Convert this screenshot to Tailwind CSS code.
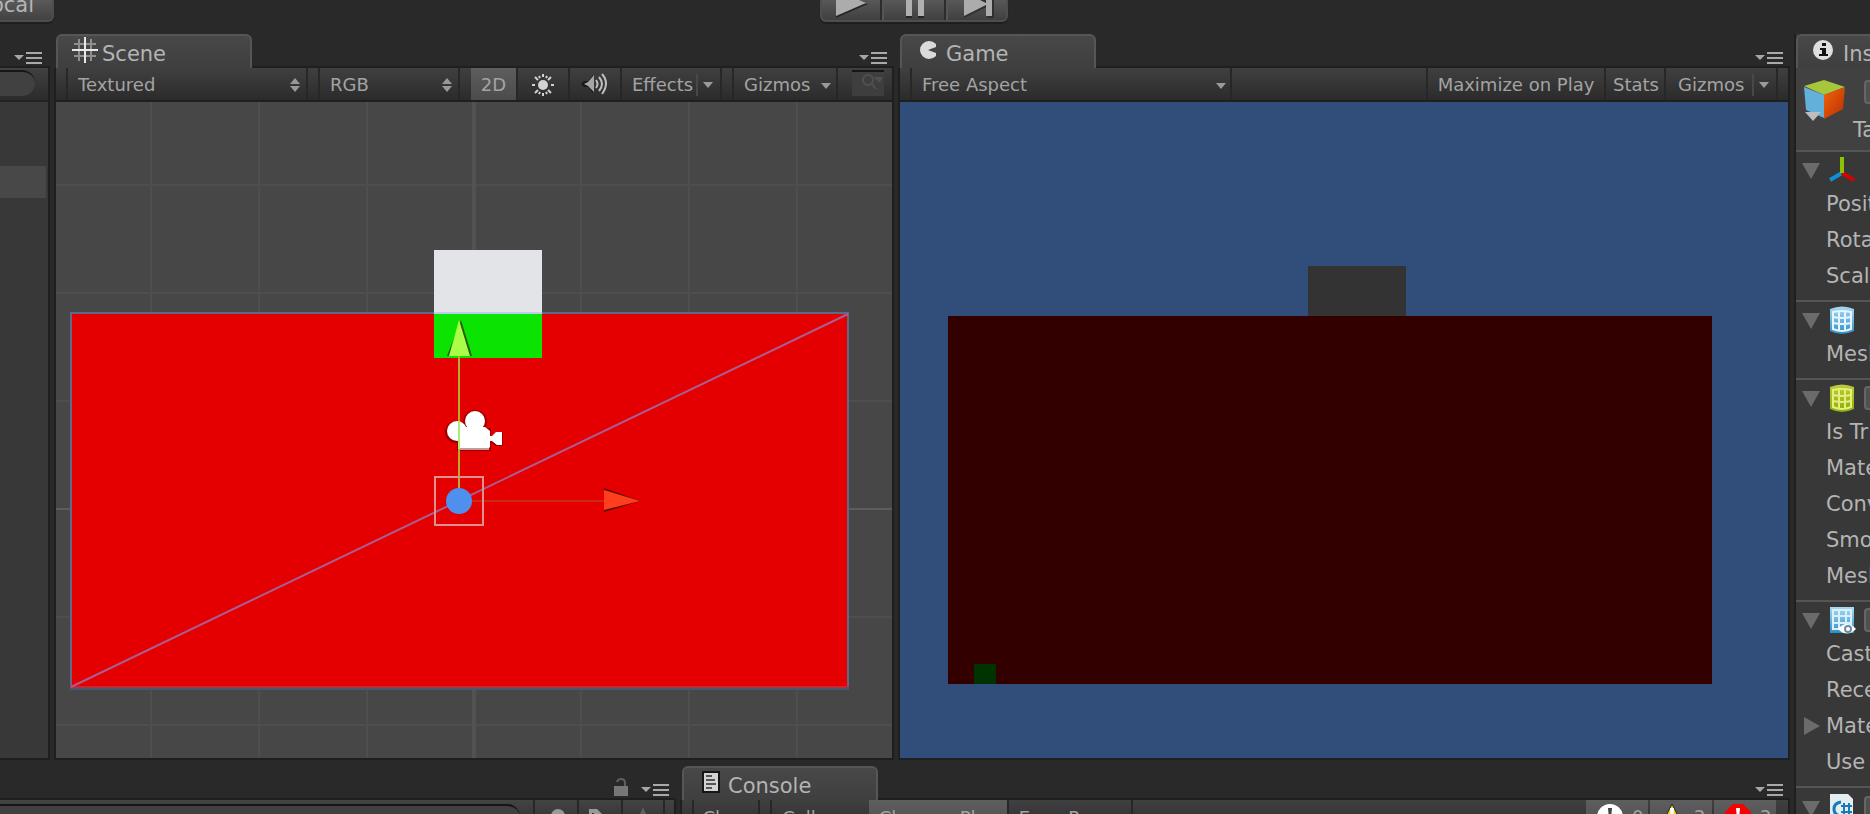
<!DOCTYPE html>
<html lang="en">
<head>
<meta charset="utf-8">
<title>Unity Editor</title>
<script src="https://cdn.jsdelivr.net/npm/@tailwindcss/browser@4"></script>
</head>
<body class="h-screen overflow-hidden bg-[#292929] text-[#a3a3a3] font-['DejaVu_Sans','Liberation_Sans',sans-serif] text-[18px] leading-6">
<svg class="absolute h-0 w-0">
  <!-- shared glyphs -->
  <symbol id="menu" viewBox="0 0 30 12"><path d="M1 3h10L6 8z" fill="#a6a6a6"/><path d="M13 1h16M13 6h16M13 11h16" stroke="#a9a9a9" stroke-width="2"/></symbol>
  <symbol id="down" viewBox="0 0 10 6"><path d="M0 0h10L5 6z" fill="#9a9a9a"/></symbol>
  <symbol id="updown" viewBox="0 0 10 14"><path d="M0 6L5 0l5 6zM0 8h10l-5 6z" fill="#999"/></symbol>
  <symbol id="foldout" viewBox="0 0 18 16"><path d="M0 0h18L9 16z" fill="#6b6b6b"/></symbol>
  <symbol id="bang" viewBox="0 0 28 28"><path d="M12 5h4l-1 11h-2zM12 18h4v4h-4z"/></symbol>
  <linearGradient id="blue" x1="0" y1="0" x2="0" y2="1"><stop offset="0" stop-color="#a9daf4"/><stop offset="1" stop-color="#2e8fc9"/></linearGradient>
  <linearGradient id="lime" x1="0" y1="0" x2="0" y2="1"><stop offset="0" stop-color="#bccb3c"/><stop offset="1" stop-color="#88ae10"/></linearGradient>
  <linearGradient id="orange" x1="0" y1="0" x2="1" y2="1"><stop offset="0" stop-color="#f2660c"/><stop offset="1" stop-color="#b82c04"/></linearGradient>
</svg>
<div class="flex h-full flex-col">
  <header class="relative flex h-[34px] shrink-0 items-start justify-center overflow-hidden">
    <button class="absolute left-0 top-0 flex h-[22px] w-[54px] items-center justify-end rounded-br-md border-r-2 border-b-2 border-[#4e4e4e] bg-linear-to-b from-[#5a5a5a] to-[#424242] pr-[18px] pb-[11px] text-[21px] text-[#b4b4b4] shadow-[0_2px_1px_#1e1e1e]">Local</button>
    <div class="mr-[43px] flex h-[22px] rounded-b-md border-x-2 border-b-2 border-[#4e4e4e] bg-linear-to-b from-[#585858] to-[#404040] shadow-[0_2px_1px_#1e1e1e]">
      <button aria-label="Play" class="w-[60px] border-r-2 border-[#2c2c2c] pl-[14px]"><svg class="h-5 w-8" viewBox="0 0 32 20"><path d="M0 0v18L32 4z" fill="#252525"/><path d="M0 0v16L30 3 23 0z" fill="#acacac"/></svg></button>
      <button aria-label="Pause" class="w-[64px] border-r-2 border-l-2 border-r-[#2c2c2c] border-l-[#555] pl-[22px]"><svg class="h-5 w-6" viewBox="0 0 24 20"><path d="M0 0h6v18H0zM12 0h6v18h-6z" fill="#262626"/><path d="M0 0h6v16H0zM12 0h6v16h-6z" fill="#b0b0b0"/></svg></button>
      <button aria-label="Step" class="w-[60px] border-l-2 border-[#555] pl-[14px]"><svg class="h-5 w-8" viewBox="0 0 32 20"><path d="M2 18L25 7v11h7V0H2z" fill="#303030"/><path d="M24 3l-6-3H2v16L24 5v11h6V0h-6z" fill="#acacac"/></svg></button>
    </div>
  </header>

  <div class="flex min-h-0 flex-1 gap-1">
    <div class="flex min-w-0 flex-1 flex-col">
      <div class="flex min-h-0 flex-1 gap-1">
        <!-- hierarchy -->
        <section class="flex w-[50px] shrink-0 flex-col">
          <div class="flex h-[34px] items-end border-b-2 border-[#1f1f1f] pb-[2px] pl-[13px]"><button aria-label="Hierarchy menu" class="block"><svg class="block h-3 w-[30px]"><use href="#menu"/></svg></button></div>
          <div class="flex flex-1 flex-col border-r-2 border-b-2 border-[#1f1f1f] bg-[#383838]">
            <div class="h-[34px] border-b-2 border-[#222] bg-linear-to-b from-[#414141] to-[#2b2b2b] pt-[2px]"><input aria-label="Search hierarchy" class="block h-[26px] w-[35px] rounded-r-full border-t-2 border-[#161616] bg-[#414141]"></div>
            <div class="mt-16 mr-[2px] h-8 bg-[#484848]"></div>
          </div>
        </section>

        <!-- scene -->
        <section class="flex min-w-0 grow-[840] basis-0 flex-col">
          <div class="flex h-[34px] items-end justify-between pl-[2px]">
            <h2 class="flex h-full w-[196px] items-center rounded-t-md border-x-2 border-t-2 border-[#565656] bg-linear-to-b from-[#484848] to-[#3f3f3f] pt-1 pl-[14px] text-[21px] text-[#b4b4b4]">
              <svg class="mr-1 mb-2 h-[26px] w-[26px]" viewBox="0 0 26 26"><path d="M7 2v22M19 2v22M2 7h22M2 19h22" stroke="#8f8f8f" stroke-width="2"/><path d="M13 0v26M0 13h26" stroke="#e8e8e8" stroke-width="2"/></svg>Scene</h2>
            <div class="flex flex-1 justify-end border-b-2 border-[#1f1f1f] pr-[6px] pb-[2px]"><button aria-label="Scene menu" class="block"><svg class="block h-3 w-[30px]"><use href="#menu"/></svg></button></div>
          </div>
          <div class="flex min-h-0 flex-1 flex-col border-x-2 border-b-2 border-[#1f1f1f]">
            <div class="flex h-[34px] shrink-0 border-b-2 border-[#1f1f1f] bg-linear-to-b from-[#404040] to-[#2b2b2b]">
              <label class="relative ml-[10px] flex w-[242px] border-x-2 border-[#272727]"><select aria-label="Draw mode" class="w-full appearance-none pt-[2px] pl-[10px]"><option>Textured</option></select><svg class="pointer-events-none absolute top-[10px] right-[6px] h-[14px] w-[10px]"><use href="#updown"/></svg></label>
              <label class="relative ml-[10px] flex w-[142px] border-x-2 border-[#272727]"><select aria-label="Render mode" class="w-full appearance-none pt-[2px] pl-[10px]"><option>RGB</option></select><svg class="pointer-events-none absolute top-[10px] right-[6px] h-[14px] w-[10px]"><use href="#updown"/></svg></label>
              <button class="ml-[11px] w-[45px] bg-linear-to-b from-[#5e5e5e] to-[#4b4b4b] pt-[2px]">2D</button>
              <button aria-label="Lighting" class="w-[54px] border-x-2 border-[#272727] pt-[2px] pl-[14px]"><svg class="block h-[22px] w-[22px]" viewBox="0 0 22 22"><circle cx="11" cy="11" r="5" fill="#d2d2d2"/><path d="M11 0v3M11 19v3M0 11h3M19 11h3M3 3l3 3M16 16l3 3M3 19l3-3M16 6l3-3M7 2l1 2M14 18l1 2M7 20l1-2M14 4l1-2" stroke="#d2d2d2" stroke-width="2"/></svg></button>
              <button aria-label="Audio" class="w-[50px] pl-[10px]"><svg class="block h-6 w-7" viewBox="0 0 28 24"><path d="M1 12l3-3h4l5-6v18l-5-6H4z" fill="#191919"/><path d="M4 12l4-2 6-7v17l-6-6z" fill="#a5a5a5"/><path d="M16 8q3 4 0 8M19 5q6 7 0 14M22 2q8 9 0 20" fill="none" stroke="#bdbdbd" stroke-width="2"/></svg></button>
              <button class="flex w-[102px] items-center border-x-2 border-[#272727] pt-[2px] pl-[10px]">Effects<span class="ml-auto mr-[5px] h-[22px] w-[2px] bg-[#484848]"></span><svg class="mr-[7px] h-[6px] w-[10px]"><use href="#down"/></svg></button>
              <button class="ml-[10px] flex w-[106px] items-center justify-between border-x-2 border-[#272727] pt-[2px] pr-[5px] pl-[10px]">Gizmos<svg class="mt-[2px] h-[6px] w-[10px]"><use href="#down"/></svg></button>
              <div class="relative ml-[14px] pt-[2px]"><input aria-label="Search scene" class="block h-[26px] w-8 border-t-2 border-[#161616] bg-[#3e3e3e]"><svg class="pointer-events-none absolute top-[6px] left-[10px] h-4 w-5" viewBox="0 0 20 16" fill="none" stroke="#505050" stroke-width="2"><circle cx="6" cy="6" r="5"/><path d="M10 10l4 5M14 4h6l-3 3z"/></svg></div>
            </div>
            <svg class="min-h-0 w-full flex-1 bg-[#474747]" viewBox="56 102 836 656" preserveAspectRatio="xMidYMid slice">
              <path d="M151 102v656M259 102v656M367 102v656M581 102v656M689 102v656M797 102v656M56 185h836M56 293h836M56 401h836M56 617h836M56 725h836" stroke="#4e4e4e" stroke-width="2"/>
              <path d="M474 102v656" stroke="#525252" stroke-width="4"/><path d="M56 509h836" stroke="#5c5c5c" stroke-width="2"/>
              <path d="M71 314h777v374H71z" fill="#e40000"/>
              <path d="M434 250h108v64H434z" fill="#e3e4e8"/><path d="M434 314h108v44H434z" fill="#0be400"/>
              <path d="M71 688V313M848 313v375" stroke="#606a88" stroke-width="2" fill="none"/><path d="M70 313h364M542 313h307" stroke="#5b6b88" stroke-width="2"/><path d="M434 313h108" stroke="#b9cdec" stroke-width="2"/>
              <path d="M70 687h779" stroke="#bd2c3c" stroke-width="2"/><path d="M70 689h779" stroke="#4b5768" stroke-width="2"/>
              <path d="M71 687L848 314" stroke="#a95d91" stroke-width="2"/>
              <g fill="#9c0000"><circle cx="456" cy="432" r="11"/><circle cx="475" cy="422" r="12"/><path d="M457 428h34v23h-34zM490 438l6-6h7v14h-7l-6-3z"/></g>
              <g fill="#fff"><circle cx="457" cy="431" r="10"/><circle cx="475" cy="421" r="10"/><path d="M458 427h27l5 4v16l-2 2h-30zM489 436h3l4-4h6v13h-5l-5-4h-3z"/></g><path d="M459 449h30" stroke="#c49c9c" stroke-width="2"/>
              <path d="M459 356v132" stroke="#b5aa2b" stroke-width="2"/><path d="M459 421v28" stroke="#a9ef70" stroke-width="2"/>
              <path d="M461 320l11 36h-25z" fill="#2b5a10"/><path d="M459 320l11 36h-21z" fill="#a8ff46"/>
              <path d="M472 501h132" stroke="#cb2a15" stroke-width="2"/><path d="M604 488l36 13-36 11z" fill="#551005"/><path d="M604 490l36 11-36 9z" fill="#ff3e1e"/>
              <path d="M435 477h48v48h-48z" fill="none" stroke="#dc9090" stroke-width="2"/>
              <circle cx="459" cy="501" r="13" fill="#4f8fee"/>
            </svg>
          </div>
        </section>

        <!-- game -->
        <section class="flex min-w-0 grow-[892] basis-0 flex-col">
          <div class="flex h-[34px] items-end justify-between pl-[2px]">
            <h2 class="flex h-full w-[196px] items-center rounded-t-md border-x-2 border-t-2 border-[#565656] bg-linear-to-b from-[#484848] to-[#3f3f3f] pt-1 pl-[18px] text-[21px] text-[#b4b4b4]">
              <svg class="mr-[10px] mb-2 h-[18px] w-4" viewBox="0 0 16 18"><path d="M16 3Q13 0 9 0a9 9 0 000 18q4 0 7-3v-3l-8-3 8-3z" fill="#dadada"/></svg>Game</h2>
            <div class="flex flex-1 justify-end border-b-2 border-[#1f1f1f] pr-[6px] pb-[2px]"><button aria-label="Game menu" class="block"><svg class="block h-3 w-[30px]"><use href="#menu"/></svg></button></div>
          </div>
          <div class="flex min-h-0 flex-1 flex-col border-x-2 border-b-2 border-[#1f1f1f]">
            <div class="flex h-[34px] shrink-0 border-b-2 border-[#1f1f1f] bg-linear-to-b from-[#404040] to-[#2b2b2b]">
              <label class="relative ml-[10px] flex w-[322px] border-x-2 border-[#272727]"><select aria-label="Aspect" class="w-full appearance-none pt-[2px] pl-[10px]"><option>Free Aspect</option></select><svg class="pointer-events-none absolute top-[15px] right-[4px] h-[6px] w-[10px]"><use href="#down"/></svg></label>
              <button class="ml-auto w-[178px] border-l-2 border-[#272727] pt-[2px] whitespace-nowrap">Maximize on Play</button>
              <button class="w-[62px] border-x-2 border-[#272727] pt-[2px] pl-[2px]">Stats</button>
              <button class="mr-[10px] flex w-[112px] items-center border-r-2 border-[#272727] pt-[2px] pl-3">Gizmos<span class="ml-auto mr-[5px] h-[22px] w-[2px] bg-[#484848]"></span><svg class="mr-[7px] h-[6px] w-[10px]"><use href="#down"/></svg></button>
            </div>
            <svg class="min-h-0 w-full flex-1 bg-[#314d79]" viewBox="900 102 888 656" preserveAspectRatio="xMidYMid slice">
              <path d="M1308 266h98v50h-98z" fill="#333"/><path d="M948 316h764v368H948z" fill="#330000"/><path d="M974 664h22v20h-22z" fill="#003300"/>
            </svg>
          </div>
        </section>
      </div>

      <!-- project and console -->
      <div class="mt-[6px] flex h-[48px] shrink-0 gap-1 overflow-hidden">
        <section class="flex w-[676px] shrink-0 flex-col">
          <div class="flex h-[34px] shrink-0 items-end justify-end gap-3 border-b-2 border-[#1f1f1f] pr-[6px] pb-[2px]">
            <button aria-label="Lock"><svg class="block h-[18px] w-[14px]" viewBox="0 0 14 18"><path d="M0 8h14v10H0z" fill="#777"/><path d="M3 4q1-3 4-3 4 0 4 4v3" fill="none" stroke="#5f5f5f" stroke-width="2"/></svg></button>
            <button aria-label="Project menu"><svg class="block h-3 w-[30px]"><use href="#menu"/></svg></button>
          </div>
          <div class="flex h-[34px] shrink-0 border-r-2 border-[#1f1f1f] bg-linear-to-b from-[#444] to-[#2b2b2b]">
            <div class="flex-1 pt-1"><input aria-label="Search project" class="block h-[26px] w-[520px] rounded-r-full border-t-2 border-[#161616] bg-[#404040]"></div>
            <button aria-label="Filter by type" class="w-11 border-l-2 border-[#272727] pl-[15px]"><svg class="h-6 w-6" viewBox="0 0 24 24"><circle cx="8" cy="11" r="7" fill="#999"/></svg></button>
            <button aria-label="Filter by label" class="w-11 border-l-2 border-[#272727] pl-[9px]"><svg class="h-6 w-6" viewBox="0 0 24 24"><path d="M1 4h8l6 6v14H1z" fill="#999"/><path d="M5 8v10" stroke="#333" stroke-width="2"/></svg></button>
            <button aria-label="Save search" class="w-11 border-x-2 border-[#272727] pl-[9px]"><svg class="h-6 w-6" viewBox="0 0 24 24"><path d="M11 2l3 7h8l-6 5 2 8-7-5-7 5 2-8-6-5h8z" fill="#606060"/></svg></button>
            <div class="w-[9px]"></div>
          </div>
        </section>
        <section class="flex min-w-0 flex-1 flex-col">
          <div class="flex h-[34px] shrink-0 items-end pl-[2px]">
            <h2 class="flex h-full w-[196px] items-center rounded-t-md border-x-2 border-t-2 border-[#565656] bg-linear-to-b from-[#484848] to-[#3f3f3f] pt-1 pl-[18px] text-[21px] text-[#b4b4b4]">
              <svg class="mr-2 mb-2 h-[22px] w-[18px]" viewBox="0 0 18 22"><path d="M0 0h18v22H0z" fill="#161616"/><path d="M2 2h14v18H2z" fill="#d2d2d2"/><path d="M4 5h6M4 9h9M4 13h10M4 17h6" stroke="#555" stroke-width="2"/></svg>Console</h2>
            <div class="flex flex-1 justify-end border-b-2 border-[#1f1f1f] pr-[6px] pb-[2px]"><button aria-label="Console menu" class="block"><svg class="block h-3 w-[30px]"><use href="#menu"/></svg></button></div>
          </div>
          <div class="flex h-[34px] shrink-0 border-x-2 border-[#1f1f1f] bg-linear-to-b from-[#404040] to-[#2b2b2b]">
            <button class="ml-[10px] w-[68px] border-x-2 border-[#272727] pt-[2px]">Clear</button>
            <button class="ml-[10px] w-[99px] border-l-2 border-[#272727] pt-[2px]">Collapse</button>
            <button class="w-[138px] bg-linear-to-b from-[#5e5e5e] to-[#4b4b4b] pt-[2px] whitespace-nowrap">Clear on Play</button>
            <button class="w-[126px] border-x-2 border-[#272727] pt-[2px] whitespace-nowrap">Error Pause</button>
            <div class="mr-3 ml-auto flex gap-[2px]">
              <button class="flex w-[62px] items-center gap-2 bg-linear-to-b from-[#5e5e5e] to-[#4b4b4b] pl-[10px]"><svg class="h-7 w-7" viewBox="0 0 28 28"><circle cx="14" cy="14" r="13" fill="#fff"/><use href="#bang" fill="#444"/></svg>0</button>
              <button class="flex w-[62px] items-center gap-2 bg-linear-to-b from-[#5e5e5e] to-[#4b4b4b] pl-[8px]"><svg class="h-7 w-7" viewBox="0 0 28 28"><path d="M14 1l13 26H1z" fill="#f0d820" stroke="#222"/><use href="#bang" fill="#fff"/></svg>2</button>
              <button class="flex w-[62px] items-center gap-2 bg-linear-to-b from-[#5e5e5e] to-[#4b4b4b] pl-[10px]"><svg class="h-7 w-7" viewBox="0 0 28 28"><path d="M9 1h10l8 8v10l-8 8H9l-8-8V9z" fill="#f80000"/><use href="#bang" fill="#fff"/></svg>2</button>
            </div>
          </div>
        </section>
      </div>
    </div>

    <!-- inspector -->
    <aside class="flex w-[76px] shrink-0 flex-col overflow-hidden border-l-2 border-[#1f1f1f] bg-[#383838] text-[21px] whitespace-nowrap text-[#b4b4b4]">
      <h2 class="flex h-[34px] shrink-0 items-center rounded-tl-md border-t-2 border-l-2 border-[#565656] bg-linear-to-b from-[#484848] to-[#3f3f3f] pt-1 pl-[14px]"><svg class="mr-[9px] mb-2 h-[22px] w-[22px] shrink-0" viewBox="0 0 22 22"><circle cx="11" cy="11" r="10" fill="#dedede"/><path d="M10 4h4v3h-4zM8 9h6v6h2v2H7v-2h3v-4H8z" fill="#111"/></svg>Inspector</h2>
      <div class="flex h-[82px] shrink-0 flex-col bg-[#414141] pt-3">
        <div class="flex h-[38px] shrink-0 pl-2"><svg class="h-[42px] w-[42px] shrink-0" viewBox="0 0 42 42"><path d="M0 6L20 0l21 7-21 8z" fill="#a6c63c"/><path d="M0 7l20 8v23L2 30z" fill="#63b0db"/><path d="M20 15l21-8-2 22-19 10z" fill="url(#orange)"/><path d="M1 32h16l-8 9z" fill="#bdbdbd"/></svg><input type="checkbox" checked aria-label="Active" class="ml-[18px] h-[24px] w-[24px] shrink-0 appearance-none rounded border-2 border-[#666] bg-[#505050]"></div>
        <div class="pl-[57px] leading-[24px]">Tag</div>
      </div>
      <section class="shrink-0 border-t-2 border-[#555] pb-[6px]">
        <h3 class="flex h-[34px] items-center pt-[2px] pl-[6px]"><svg class="mt-[2px] mr-[8px] h-4 w-[18px] shrink-0"><use href="#foldout"/></svg><svg class="h-7 w-7 shrink-0" viewBox="0 0 28 28" fill="none" stroke-width="4"><path d="M14 17L2 24" stroke="#1191d4"/><path d="M14 17l12 7" stroke="#d90000"/><path d="M14 1v16" stroke="#8bc400"/></svg></h3>
        <div class="h-9 pl-[30px] leading-9">Position</div><div class="h-9 pl-[30px] leading-9">Rotation</div><div class="h-9 pl-[30px] leading-9">Scale</div>
      </section>
      <section class="shrink-0 border-t-2 border-[#555] pb-[6px]">
        <h3 class="flex h-[34px] items-center pt-[2px] pl-[6px]"><svg class="mt-[2px] mr-[10px] h-4 w-[18px] shrink-0"><use href="#foldout"/></svg><svg class="h-7 w-6 shrink-0" viewBox="0 0 24 28"><path d="M0 3q12-5 24 0v22q-12 6-24 0z" fill="url(#blue)"/><path d="M3 6q9-2 18 0v17q-9 4-18 0zM3 11q9 2 18 0M3 17q9 2 18 0M9 5v19M15 5v19" fill="none" stroke="#e6f6ff" stroke-width="2"/></svg></h3>
        <div class="h-9 pl-[30px] leading-9">Mesh</div>
      </section>
      <section class="shrink-0 border-t-2 border-[#555] pb-[6px]">
        <h3 class="flex h-[34px] items-center pt-[2px] pl-[6px]"><svg class="mt-[2px] mr-[10px] h-4 w-[18px] shrink-0"><use href="#foldout"/></svg><svg class="h-7 w-6 shrink-0" viewBox="0 0 24 28"><path d="M0 3q12-5 24 0v22q-12 6-24 0z" fill="url(#lime)"/><path d="M3 6q9-2 18 0v17q-9 4-18 0zM3 11q9 2 18 0M3 17q9 2 18 0M9 5v19M15 5v19" fill="none" stroke="#e8ef78" stroke-width="2"/></svg><input type="checkbox" checked aria-label="Collider enabled" class="ml-[10px] h-[24px] w-[24px] shrink-0 appearance-none rounded border-2 border-[#666] bg-[#505050]"></h3>
        <div class="h-9 pl-[30px] leading-9">Is Trigger</div><div class="h-9 pl-[30px] leading-9">Material</div><div class="h-9 pl-[30px] leading-9">Convex</div><div class="h-9 pl-[30px] leading-9">Smooth Sphere</div><div class="h-9 pl-[30px] leading-9">Mesh</div>
      </section>
      <section class="shrink-0 border-t-2 border-[#555] pb-[6px]">
        <h3 class="flex h-[34px] items-center pt-[2px] pl-[6px]"><svg class="mt-[2px] mr-[10px] h-4 w-[18px] shrink-0"><use href="#foldout"/></svg><svg class="h-7 w-[26px] shrink-0" viewBox="0 0 26 28"><path d="M0 1h24v26H0z" fill="url(#blue)"/><path d="M3 10h18M3 17h18M9 4v19M16 4v19M3 4h18v19H3z" fill="none" stroke="#d9f0fb" stroke-width="2"/><path d="M8 23q9-10 18 0-9 9-18 0z" fill="#fff"/><circle cx="18" cy="23" r="4" fill="#6a8da4"/><circle cx="18" cy="23" r="2" fill="#fff"/></svg><input type="checkbox" checked aria-label="Renderer enabled" class="ml-[8px] h-[24px] w-[24px] shrink-0 appearance-none rounded border-2 border-[#666] bg-[#505050]"></h3>
        <div class="h-9 pl-[30px] leading-9">Cast Shadows</div><div class="h-9 pl-[30px] leading-9">Receive Shadows</div><div class="flex h-9 items-center pl-2 leading-9"><svg class="mr-[6px] h-[18px] w-4 shrink-0" viewBox="0 0 16 18"><path d="M0 0v18l16-9z" fill="#6b6b6b"/></svg>Materials</div><div class="h-9 pl-[30px] leading-9">Use Light Probes</div>
      </section>
      <section class="shrink-0 border-t-2 border-[#555]">
        <h3 class="flex h-[38px] items-center pt-[2px] pl-[6px]"><svg class="mt-[2px] mr-[10px] h-4 w-[18px] shrink-0"><use href="#foldout"/></svg><svg class="h-7 w-6 shrink-0" viewBox="0 0 24 28"><path d="M0 0h18l5 5v23H0z" fill="#e4edf2"/><path d="M11 8q-7 1-7 7t7 7" fill="none" stroke="#147db8" stroke-width="3"/><path d="M14 9v12M19 9v12M11 12h11M11 18h11" stroke="#147db8" stroke-width="2"/></svg><input type="checkbox" checked aria-label="Script enabled" class="ml-[10px] h-[24px] w-[24px] shrink-0 appearance-none rounded border-2 border-[#666] bg-[#505050]"></h3>
      </section>
    </aside>
  </div>
</div>
</body>
</html>
